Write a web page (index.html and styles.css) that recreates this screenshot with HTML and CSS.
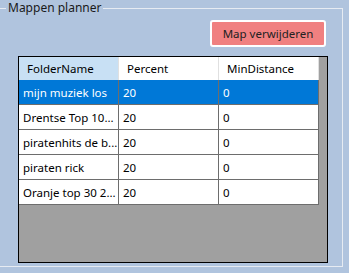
FILE: index.html
```html
<!DOCTYPE html>
<html lang="nl">
<head>
    <meta charset="UTF-8">
    <title>Mappen planner</title>
    <link rel="stylesheet" href="styles.css">
</head>
<body>
    <fieldset class="group">
        <legend>Mappen planner</legend>

        <div class="toolbar">
            <button class="button danger">Map verwijderen</button>
        </div>

        <div class="grid">
            <table>
                <colgroup>
                    <col class="col"><col class="col"><col class="col">
                </colgroup>
                <thead>
                    <tr>
                        <th class="sorted">FolderName</th>
                        <th>Percent</th>
                        <th>MinDistance</th>
                    </tr>
                </thead>
                <tbody>
                    <tr class="selected">
                        <td>mijn muziek los</td>
                        <td>20</td>
                        <td>0</td>
                    </tr>
                    <tr>
                        <td>Drentse Top 10...</td>
                        <td>20</td>
                        <td>0</td>
                    </tr>
                    <tr>
                        <td>piratenhits de b...</td>
                        <td>20</td>
                        <td>0</td>
                    </tr>
                    <tr>
                        <td>piraten rick</td>
                        <td>20</td>
                        <td>0</td>
                    </tr>
                    <tr>
                        <td>Oranje top 30 2...</td>
                        <td>20</td>
                        <td>0</td>
                    </tr>
                </tbody>
            </table>
        </div>
    </fieldset>
</body>
</html>
```

FILE: styles.css
```css
body {
    margin: 0;
    background-color: #b0c4de;
    font-family: "Noto Sans", "Open Sans", sans-serif;
    font-size: 11.5px;
    color: #000;
}
.group {
    box-sizing: border-box;
    height: 267px;
    margin: 0 6px 0 -2px;
    padding: 0;
    border: 1px solid #e6ebf2;
    border-left: none;
}
.group legend {
    margin-left: 8px;
    padding: 0 2px;
    font-size: 12px;
    line-height: 16px;
    color: #1a1a1a;
}
.toolbar {
    display: flex;
    justify-content: flex-end;
    margin-top: 4px;
    padding-right: 16px;
}
.button {
    box-sizing: border-box;
    width: 116px;
    height: 27px;
    border: 2px solid #fff;
    border-radius: 3px;
    font-family: inherit;
    font-size: 11.5px;
    color: #222;
    cursor: pointer;
}
.button.danger {
    background-color: #f08080;
}
.grid {
    box-sizing: border-box;
    width: 310px;
    height: 207px;
    margin: 9px 0 0 20px;
    background-color: #a0a0a0;
    border: 1px solid #000;
}
table {
    table-layout: fixed;
    width: 300px;
    border-collapse: separate;
    border-spacing: 0;
}
.col {
    width: 100px;
}
th, td {
    white-space: nowrap;
    overflow: hidden;
    text-align: left;
    font-weight: normal;
}
th {
    height: 23px;
    padding: 0 0 0 8px;
    background-color: #fff;
    border-right: 1px solid #e0e0e0;
}
th.sorted {
    background-color: #c8e0f4;
}
td {
    height: 24px;
    padding: 0 0 0 4px;
    background-color: #fff;
    border-right: 1px solid #6d6d6d;
    border-bottom: 1px solid #6d6d6d;
}
tr.selected td {
    background-color: #0078d7;
    color: #fff;
}
```
